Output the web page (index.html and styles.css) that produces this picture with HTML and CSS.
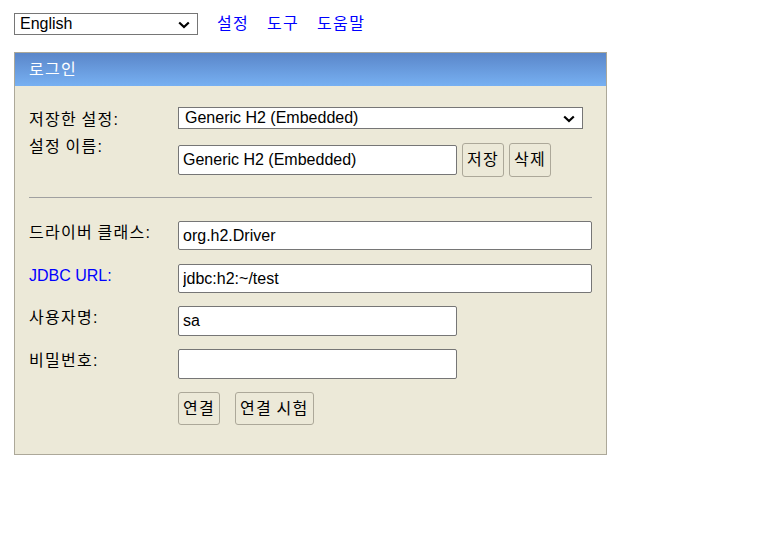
FILE: index.html
```html
<!DOCTYPE html>
<html lang="ko">
<head>
<meta charset="utf-8">
<title>H2 Console</title>
<link rel="stylesheet" href="styles.css">
</head>
<body>
<div class="topbar">
  <div class="select-wrap">
    <select class="lang">
      <option>English</option>
    </select>
    <svg class="chev" width="12" height="8" viewBox="0 0 12 8" aria-hidden="true"><polyline points="1.2,1.5 6,6 10.8,1.5" fill="none" stroke="#000" stroke-width="2.2"/></svg>
  </div>
  <nav class="links">
    <a href="#" class="toplink ko">설정</a>
    <a href="#" class="toplink ko">도구</a>
    <a href="#" class="toplink ko">도움말</a>
  </nav>
</div>

<div class="panel">
  <div class="panel-head"><span class="ko">로그인</span></div>
  <form class="form">
    <div class="row row-saved">
      <span class="label"><span class="ko">저장한</span> <span class="ko">설정</span>:</span>
      <div class="select-wrap">
        <select class="saved">
          <option>Generic H2 (Embedded)</option>
        </select>
        <svg class="chev" width="12" height="8" viewBox="0 0 12 8" aria-hidden="true"><polyline points="1.2,1.5 6,6 10.8,1.5" fill="none" stroke="#000" stroke-width="2.2"/></svg>
      </div>
    </div>
    <div class="row row-name">
      <span class="label"><span class="ko">설정</span> <span class="ko">이름</span>:</span>
      <div class="field-group">
        <input class="text short" type="text" value="Generic H2 (Embedded)">
        <button type="button" class="btn"><span class="ko">저장</span></button>
        <button type="button" class="btn"><span class="ko">삭제</span></button>
      </div>
    </div>
    <hr class="sep">
    <div class="row row-driver">
      <span class="label"><span class="ko">드라이버</span> <span class="ko">클래스</span>:</span>
      <input class="text long" type="text" value="org.h2.Driver">
    </div>
    <div class="row row-url">
      <a href="#" class="label label-link">JDBC URL:</a>
      <input class="text long" type="text" value="jdbc:h2:~/test">
    </div>
    <div class="row row-user">
      <span class="label"><span class="ko">사용자명</span>:</span>
      <input class="text short" type="text" value="sa">
    </div>
    <div class="row row-pass">
      <span class="label"><span class="ko">비밀번호</span>:</span>
      <input class="text short" type="password" value="">
    </div>
    <div class="row row-actions">
      <span class="label"></span>
      <div class="actions">
        <button type="button" class="btn btn-tall"><span class="ko">연결</span></button>
        <button type="button" class="btn btn-tall"><span class="ko">연결</span> <span class="ko">시험</span></button>
      </div>
    </div>
  </form>
</div>
</body>
</html>
```

FILE: styles.css
```css
html, body {
  background: #ffffff;
}

body {
  margin: 0;
  padding: 13px 0 0 14px;
  font-family: "Liberation Sans", "Noto Sans CJK KR", sans-serif;
  font-size: 16px;
  line-height: 18px;
  color: #000;
}

select, input, button {
  font-family: "Liberation Sans", "Noto Sans CJK KR", sans-serif;
  font-size: 16px;
  color: #000;
  margin: 0;
}

.ko {
  letter-spacing: 1.3px;
}

.topbar {
  display: flex;
  align-items: center;
  height: 22px;
}

.select-wrap {
  position: relative;
  display: flex;
}

.chev {
  position: absolute;
  right: 8px;
  top: 8px;
  pointer-events: none;
}

.lang,
.saved {
  -webkit-appearance: none;
  appearance: none;
  height: 22px;
  box-sizing: border-box;
  border: 1px solid #767676;
  border-radius: 0;
  background: #fff;
  padding: 0 24px 0 5px;
  line-height: 20px;
}

.lang {
  width: 184px;
}

.saved {
  width: 405px;
  padding-left: 6px;
}

.links {
  display: flex;
  gap: 18px;
  margin-left: 19px;
}

.toplink {
  color: #0000ff;
  text-decoration: none;
  line-height: 18px;
}

.panel {
  margin-top: 17px;
  width: 593px;
  box-sizing: border-box;
  border: 1px solid #aca899;
  background: #ece9d8;
}

.panel-head {
  height: 33px;
  box-sizing: border-box;
  padding: 8px 14px 7px;
  color: #fff;
  line-height: 18px;
  background: linear-gradient(to bottom, #5a86c9, #77b0f2);
}

.form {
  padding: 21px 14px 29px;
  margin: 0;
}

.row {
  display: flex;
  align-items: flex-start;
}

.label {
  flex: none;
  width: 149px;
  padding-top: 3px;
  line-height: 18px;
  color: #000;
  text-decoration: none;
}

.label-link {
  color: #0000ff;
}

.row-saved .label {
  padding-top: 4px;
}

.row-name {
  margin-top: 14px;
  height: 34px;
}

.row-name .label {
  padding-top: 0;
  margin-top: -5px;
}

.field-group {
  display: flex;
  align-items: center;
  height: 34px;
}

.text {
  box-sizing: border-box;
  height: 29px;
  border: 1px solid #767676;
  border-radius: 2px;
  background: #fff;
  padding: 0 4px;
  outline: none;
}

.long {
  width: 414px;
}

.short {
  width: 279px;
  height: 30px;
}

.btn {
  box-sizing: border-box;
  height: 34px;
  padding: 0 4px;
  border: 1px solid #aca899;
  border-radius: 3px;
  background: #ece9d8;
  line-height: 18px;
  margin-left: 5px;
  white-space: nowrap;
}

.sep {
  margin: 20px 0 0;
  border: none;
  border-top: 1px solid #a0a0a0;
  height: 0;
}

.row-driver {
  margin-top: 23px;
}

.row-url {
  margin-top: 14px;
}

.row-user,
.row-pass,
.row-actions {
  margin-top: 13px;
}

.actions {
  display: flex;
  gap: 15px;
}

.btn-tall {
  height: 33px;
  margin-left: 0;
}
```
